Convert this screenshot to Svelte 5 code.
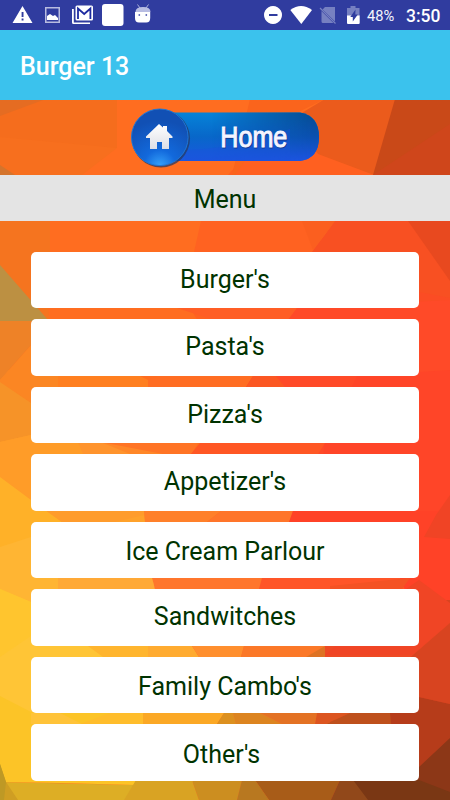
<script lang="ts">
	type Item = { label: string; low?: boolean; trailing?: boolean };

	const items: Item[] = [
		{ label: "Burger's" },
		{ label: "Pasta's" },
		{ label: "Pizza's" },
		{ label: "Appetizer's" },
		{ label: 'Ice Cream Parlour', low: true },
		{ label: 'Sandwitches' },
		{ label: "Family Cambo's", low: true },
		{ label: "Other's", low: true, trailing: true }
	];

	// Low-poly backdrop, painted in order: [fill, points]
	const facets: [string, string][] = [
		// broad areas under the smaller facets
		['#fb8623', '0,370 130,370 150,450 0,450'],
		['#ff9c28', '0,430 160,443 160,560 0,560'],
		['#ffc131', '0,540 150,560 190,782 0,782'],
		['#d84420', '330,600 450,580 450,800 330,800'],
		// top strip
		['#f76f1e', '0,99 117,99 117,148 82,175 0,175'],
		['#f56d1d', '0,99 117,99 117,148 0,137'],
		['#e56c22', '0,99 46,99 0,116'],
		['#d4742c', '0,165 15,175 0,175'],
		['#ff6020', '250,150 320,150 374,175 400,222 228,175'],
		['#fa641c', '250,99 325,99 270,126 235,175 232,175'],
		['#eb5b1c', '325,99 396,99 374,175 318,154 290,120'],
		['#c94918', '395,99 450,99 450,175 373,175'],
		['#cf461b', '450,124 450,175 373,175'],
		// below the menu bar
		['#f5741f', '0,221 50,221 50,320 0,320'],
		['#ff6221', '201,221 302,221 335,254 335,320 170,320 194,252'],
		['#fb5f1f', '302,221 335,221 313,250'],
		['#f85022', '335,221 450,221 450,310 290,310 312,252'],
		['#e8491f', '408,221 450,221 450,281'],
		['#fb4c24', '419,292 450,298 450,310 419,310'],
		['#bc9042', '0,265 48,320 48,321 0,321'],
		// left to right across each band
		['#ee8227', '0,321 60,321 31,345 0,380'],
		['#fb8623', '0,380 31,345 60,321 60,450 31,403 0,383'],
		['#f69328', '0,382 31,403 80,450 31,435 0,442'],
		['#ff6d20', '48,308 190,308 240,390 60,390'],
		['#ff5e25', '177,308 200,308 297,308 270,390 243,390 211,319'],
		['#ff4a28', '297,308 450,300 450,600 260,600 245,376'],
		['#fb8623', '31,376 60,376 60,390 31,390'],
		['#ff7f20', '58,376 140,376 148,380 148,420 58,420'],
		['#ff6d22', '148,380 158,376 253,376 246,387 200,440 148,440'],
		['#fb5722', '253,376 276,376 285,387 322,443 200,443 246,387'],
		['#ff4528', '357,376 450,370 450,580 320,580 324,443'],
		['#ff9c28', '0,442 31,435 83,443 160,522 60,522 31,500 0,477'],
		['#ff8728', '78,443 162,443 168,455 200,522 145,522 128,454'],
		['#ff942d', '78,442 103,443 130,454 83,454'],
		['#ff7425', '106,443 162,443 198,443 191,455 168,455'],
		['#ff5724', '200,443 325,443 317,456 290,522 190,470 190,455'],
		['#ffb128', '0,477 31,500 62,522 31,538 0,548'],
		['#ff9c2c', '47,511 144,511 145,522 62,522'],
		['#ffa22b', '115,522 144,515 145,522'],
		['#ff802a', '144,511 221,511 207,522 261,578 152,578 145,522'],
		['#ff752a', '221,511 293,511 289,522 260,589 153,589 207,522'],
		['#ff4227', '293,511 450,511 450,600 262,600'],
		['#ffb533', '0,547 31,537 62,522 145,522 152,578 150,650 31,602 0,589'],
		['#ffa936', '58,578 152,578 155,589 58,589'],
		['#ff762c', '152,578 262,578 259,589 244,646 192,646 155,589'],
		['#ff5528', '262,578 400,578 430,650 320,646 259,589'],
		['#f45324', '330,586 410,578 400,592 330,592'],
		['#ffc52e', '0,589 31,602 90,646 60,657 31,640 0,657'],
		['#ffc536', '0,657 31,636 88,646 105,657 143,720 31,714 0,697'],
		['#ffb52e', '88,646 148,646 148,657 103,657'],
		['#ffab30', '148,646 192,646 199,657 224,713 148,657'],
		['#ff8f2e', '192,646 244,646 241,657 220,713 199,657'],
		['#fb7828', '244,646 325,646 315,657 300,720 220,720 241,657'],
		['#de7324', '325,646 325,657 306,657'],
		['#ee4a24', '325,646 450,603 450,720 325,720'],
		['#f04525', '419,580 450,603 450,623 413,655 325,655 390,600'],
		['#f04425', '450,495 436,515 424,537 450,539'],
		['#fcc427', '0,696 31,712 143,713 143,782 0,782'],
		['#ffc339', '31,713 60,713 82,724 31,724'],
		['#ffbd2b', '80,724 110,713 143,713 143,724'],
		['#fba825', '143,713 224,713 217,724 195,782 143,782'],
		['#dc901f', '224,713 233,713 236,724 217,724'],
		['#dc8420', '233,713 260,713 282,724 236,724'],
		['#e37224', '260,713 317,713 315,724 282,724'],
		['#dc5520', '317,713 350,713 326,724 315,724'],
		['#d84420', '413,655 450,623 450,704 419,697 350,713'],
		['#be501c', '350,713 395,708 395,724 326,724'],
		['#b63c1a', '395,695 419,697 450,704 450,760 410,780 395,760 390,713'],
		['#8c3717', '450,738 450,800 340,800 340,781 400,781 419,767'],
		// bottom edge
		['#ddae25', '0,782 135,785 125,800 0,800'],
		['#fcc427', '0,780 136,780 135,785 60,783 0,782'],
		['#d9a323', '136,780 192,780 199,800 124,800'],
		['#cc8e20', '192,780 242,780 237,800 199,800'],
		['#b87820', '242,780 255,780 269,800 237,800'],
		['#a85c18', '255,780 340,780 331,800 269,800'],
		['#91481a', '340,780 355,780 370,800 331,800'],
		['#7a3714', '353,780 419,780 450,792 450,800 368,800'],
		['#cf9e23', '0,764 6,782 18,800 0,800'],
		['#be9925', '0,764 6,782 4,800 0,800']
	];
</script>

<div class="screen">
	<svg class="backdrop" viewBox="0 0 450 800" aria-hidden="true">
		<rect width="450" height="800" fill="#ff6d20" />
		{#each facets as [fill, points]}
			<polygon {fill} {points} />
		{/each}
	</svg>

	<div class="status">
		<svg class="notifications" width="152" height="30" viewBox="0 0 152 30" fill="#fff">
			<path d="M22.5 6 32.500 23h-20zM21.600 12v5h1.900v-5zm0 6.500v2h1.900v-2z" fill-rule="evenodd" />
			<path d="M45 7h15v16H45zm1.500 1.500v13h12v-13z" fill-rule="evenodd" fill="#b8bce0" />
			<path d="M47 20v-4l3-2 3 2 2-1 3 3v2z" />
			<path d="M72 9h1.800v13.500H90V24H73.500Q72 24 72 22.500z" />
			<rect x="75.500" y="5.500" width="17.500" height="15" rx="1.500" />
			<path d="M78 19V8.500l6.200 5.500 6.200-5.500V19" fill="none" stroke="#1d2ba0" stroke-width="1.800" />
			<rect x="102" y="4" width="21.500" height="22" rx="3" />
			<path d="M137.500 4.500 140 8m8.500-3.500L146 8" stroke="#a9afd9" stroke-width="1" />
			<path d="M135.500 12q0-5 7.500-5t7.500 5z" fill="#b8bde2" />
			<path d="M135 12h15.200v6q0 4.500-4 4.500h-7.200q-4 0-4-4.500z" />
			<circle cx="139.300" cy="15" r=".9" fill="#5963b5" />
			<circle cx="146.300" cy="15" r=".9" fill="#5963b5" />
		</svg>
		<div class="system">
			<svg width="98" height="30" viewBox="263 0 98 30" fill="#fff">
				<path d="M273 6a9 9 0 1 0 .01 0zM269 14h8.500v2H269z" fill-rule="evenodd" />
				<path d="M290.300 10Q301 2 312 10L301.300 24z" />
				<path d="M325 7h10v14.500L322.500 9.500zM321.500 11 333.500 23H323q-1.500 0-1.500-1.500z" fill="#7680c1" />
				<path d="m320 8 15.500 15.500" stroke="#7680c1" stroke-width="1.200" />
				<path d="M350.500 6h5v2h4v8H347V8h3.500z" fill="#7680c1" />
				<path d="M347 15.500h12.700V23q0 1-1 1H348q-1 0-1-1z" />
				<path d="M355.500 9.500 350.300 17h2.500v4.500l5-7h-2.500z" fill="#303c9f" />
			</svg>
			<span class="battery">48%</span>
			<span class="clock">3:50</span>
		</div>
	</div>

	<header class="toolbar">
		<h1>Burger 13</h1>
	</header>

	<div class="banner">
		<svg width="192" height="62" viewBox="129 107 192 62" role="img" aria-label="Home">
			<defs>
				<linearGradient id="pill" x1="0" y1="0" x2="0" y2="1">
					<stop offset="0" stop-color="#0683d8" />
					<stop offset=".5" stop-color="#0867c9" />
					<stop offset="1" stop-color="#1b57e0" />
				</linearGradient>
				<linearGradient id="shade" x1="0" y1="0" x2="0" y2="1">
					<stop offset="0" stop-color="#064c91" />
					<stop offset=".5" stop-color="#0b50b0" />
					<stop offset="1" stop-color="#1c53e0" />
				</linearGradient>
				<radialGradient id="disc" cx=".5" cy="1" r=".8">
					<stop offset="0" stop-color="#35a1fa" />
					<stop offset=".35" stop-color="#1269dc" />
					<stop offset="1" stop-color="#1150b4" />
				</radialGradient>
				<linearGradient id="roof" x1="0" y1="0" x2="0" y2="1">
					<stop offset="0" stop-color="#fff" />
					<stop offset="1" stop-color="#dedfe6" />
				</linearGradient>
				<linearGradient id="fade" x1="0" y1="0" x2="1" y2="0">
					<stop offset=".25" stop-color="#fff" stop-opacity="0" />
					<stop offset=".95" stop-color="#fff" />
				</linearGradient>
				<mask id="right"><rect x="175" y="110" width="146" height="53" fill="url(#fade)" /></mask>
			</defs>
			<path d="M170 112.500h130q19 3 19 24.500t-19 24H170z" fill="url(#pill)" />
			<path
				d="M175 112.500h125q19 3 19 24.500t-19 24H175z"
				fill="url(#shade)"
				mask="url(#right)"
			/>
			<path d="M185 150Q238 149 290 129v32H185z" fill="#1c53dc" opacity=".4" />
			<circle cx="161" cy="138.500" r="29" fill="#283963" opacity=".75" />
			<circle cx="159.800" cy="137.300" r="28.300" fill="url(#disc)" stroke="#1e76d6" stroke-width="1" />
			<path
				d="m159 124 4 3.500V126h4v5l5.500 5.500V138H169v11h-7v-7h-5v7h-7v-11h-4v-1.500z"
				fill="url(#roof)"
			/>
			<text class="home shadow" x="221" y="148.300" textLength="67" lengthAdjust="spacingAndGlyphs"
				>Home</text
			>
			<text class="home" x="220.300" y="147.300" textLength="67" lengthAdjust="spacingAndGlyphs"
				>Home</text
			>
		</svg>
	</div>

	<h2>Menu</h2>

	<nav>
		{#each items as item}
			<button class:low={item.low} class:trailing={item.trailing}>{item.label}</button>
		{/each}
	</nav>
</div>

<style>
	:global(body) {
		margin: 0;
	}

	.screen {
		position: relative;
		display: flex;
		flex-direction: column;
		width: 450px;
		height: 800px;
		overflow: hidden;
		font-family: Roboto, sans-serif;
		isolation: isolate;
	}

	.backdrop {
		position: absolute;
		inset: 0;
		width: 100%;
		height: 100%;
		z-index: -1;
	}

	svg {
		display: block;
	}

	.status {
		display: flex;
		justify-content: space-between;
		height: 30px;
		background: #303c9f;
		color: #fff;
	}

	.system {
		display: flex;
		align-items: center;
		padding-right: 11px;
	}

	.battery {
		width: 39px;
		padding-left: 6px;
		box-sizing: border-box;
		font-size: 14.7px;
		line-height: 30px;
		padding-top: 1px;
		color: #f4f5fc;
	}

	.clock {
		width: 33px;
		margin-left: 6px;
		padding-top: 2px;
		font-size: 17.5px;
		font-weight: 500;
	}

	.toolbar {
		display: flex;
		align-items: center;
		height: 69.5px;
		padding: 4px 20px 0;
		box-sizing: border-box;
		background: #3bc2ed;
	}

	h1 {
		margin: 0;
		font-size: 25px;
		font-weight: 500;
		color: #fff;
	}

	.banner {
		display: flex;
		justify-content: center;
		height: 75.5px;
		padding-top: 7.5px;
		box-sizing: border-box;
	}

	.home {
		font: 29px 'Liberation Sans', sans-serif;
		fill: #f4f4ff;
		stroke: #f4f4ff;
		stroke-width: 1px;
	}

	.shadow {
		fill: #173a93;
		stroke: #173a93;
	}

	h2 {
		height: 46px;
		margin: 0;
		line-height: 50px;
		font-size: 25px;
		font-weight: 400;
		text-align: center;
		color: #003300;
		background: #e4e4e4;
	}

	nav {
		display: flex;
		flex-direction: column;
		gap: 11.2px;
		padding: 31px 31px 0;
	}

	button {
		flex: none;
		height: 56.3px;
		padding: 0 0 0.8px;
		border: 0;
		border-radius: 5px;
		background: #fff;
		color: #003300;
		font: 400 25px/30px Roboto, sans-serif;
	}

	.low {
		padding: 4px 0 0;
	}

	.trailing {
		padding-right: 7px;
	}
</style>
